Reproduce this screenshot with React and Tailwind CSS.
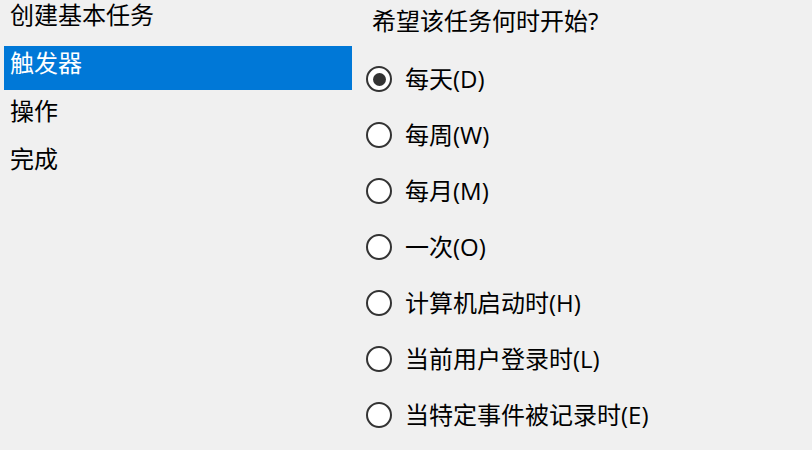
import React from "react";

const font = { fontFamily: '"Open Sans", "Noto Sans CJK SC", sans-serif' };

const items = ["创建基本任务", "触发器", "操作", "完成"];
const options = [
  "每天(D)",
  "每周(W)",
  "每月(M)",
  "一次(O)",
  "计算机启动时(H)",
  "当前用户登录时(L)",
  "当特定事件被记录时(E)",
];

function Radio({ checked }) {
  return (
    <div className="w-[26px] h-[26px] rounded-full border-2 border-[#333333] bg-white flex items-center justify-center shrink-0">
      {checked && <div className="w-[13px] h-[13px] rounded-full bg-[#333333]" />}
    </div>
  );
}

export default function App() {
  return (
    <div
      className="w-[812px] h-[450px] bg-[#f0f0f0] flex overflow-hidden text-black text-[24px]"
      style={font}
    >
      <div className="w-[352px] pl-[4px] flex flex-col shrink-0">
        {items.map((t, i) => (
          <div
            key={t}
            className={
              (i === 0 ? "h-[42px]" : "h-[44px]") +
              " mb-[4px] pl-[6px] " +
              (i === 1 ? "bg-[#0078d7] text-white" : "")
            }
          >
            <div className={i === 0 ? "h-[29px] leading-[29px]" : "h-[33px] leading-[33px]"}>{t}</div>
          </div>
        ))}
      </div>
      <div className="pl-[14px] flex flex-col">
        <div className="h-[42px] leading-[42px] pl-[6px]">希望该任务何时开始?</div>
        <div className="mt-[9px] flex flex-col">
          {options.map((o, i) => (
            <div key={o} className="h-[56px] flex items-center gap-[13px]">
              <Radio checked={i === 0} />
              <span className="leading-[30px]">{o}</span>
            </div>
          ))}
        </div>
      </div>
    </div>
  );
}
